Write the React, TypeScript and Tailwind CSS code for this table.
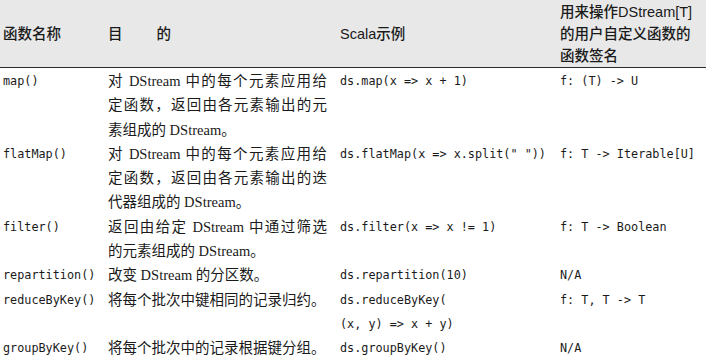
type Row = {
  name: string;
  purpose: string[];
  example: string[];
  signature: string;
};

const rows: Row[] = [
  {
    name: 'map()',
    purpose: ['对 DStream 中的每个元素应用给', '定函数，返回由各元素输出的元', '素组成的 DStream。'],
    example: ['ds.map(x => x + 1)'],
    signature: 'f: (T) -> U',
  },
  {
    name: 'flatMap()',
    purpose: ['对 DStream 中的每个元素应用给', '定函数，返回由各元素输出的迭', '代器组成的 DStream。'],
    example: ['ds.flatMap(x => x.split(" "))'],
    signature: 'f: T -> Iterable[U]',
  },
  {
    name: 'filter()',
    purpose: ['返回由给定 DStream 中通过筛选', '的元素组成的 DStream。'],
    example: ['ds.filter(x => x != 1)'],
    signature: 'f: T -> Boolean',
  },
  {
    name: 'repartition()',
    purpose: ['改变 DStream 的分区数。'],
    example: ['ds.repartition(10)'],
    signature: 'N/A',
  },
  {
    name: 'reduceByKey()',
    purpose: ['将每个批次中键相同的记录归约。'],
    example: ['ds.reduceByKey(', '(x, y) => x + y)'],
    signature: 'f: T, T -> T',
  },
  {
    name: 'groupByKey()',
    purpose: ['将每个批次中的记录根据键分组。'],
    example: ['ds.groupByKey()'],
    signature: 'N/A',
  },
];

const mono = "font-['DejaVu_Sans_Mono',monospace] text-[11.8px]";
const cols = 'grid grid-cols-[105px_232px_220px_1fr] pl-[3px]';

export default function App() {
  return (
    <div className="w-[706px] h-[357px] overflow-hidden bg-white text-[#1a1a1a]">
      <div
        className={`${cols} h-[68px] items-center bg-[#e8e8e8] border-b border-[#2a2a2a] font-['Liberation_Sans','Noto_Sans_CJK_SC',sans-serif] text-[14.5px] leading-[22px] font-medium`}
      >
        <div>函数名称</div>
        <div className="flex gap-[34px]">
          <span>目</span>
          <span>的</span>
        </div>
        <div>Scala示例</div>
        <div>
          用来操作DStream[T]
          <br />
          的用户自定义函数的
          <br />
          函数签名
        </div>
      </div>

      <div className="pt-px">
        {rows.map((r) => (
          <div key={r.name} className={`${cols} leading-[24.3px]`}>
            <div className={mono}>{r.name}</div>
            <div className="w-[219px] font-['Liberation_Serif','Noto_Sans_CJK_SC',serif] text-[14.5px]">
              {r.purpose.map((line, i) => (
                <div
                  key={i}
                  className={
                    i < r.purpose.length - 1 ? 'text-justify [text-align-last:justify]' : ''
                  }
                >
                  {line}
                </div>
              ))}
            </div>
            <div className={`${mono} whitespace-pre`}>
              {r.example.map((line, i) => (
                <div key={i}>{line}</div>
              ))}
            </div>
            <div className={`${mono} whitespace-pre`}>{r.signature}</div>
          </div>
        ))}
      </div>
    </div>
  );
}
